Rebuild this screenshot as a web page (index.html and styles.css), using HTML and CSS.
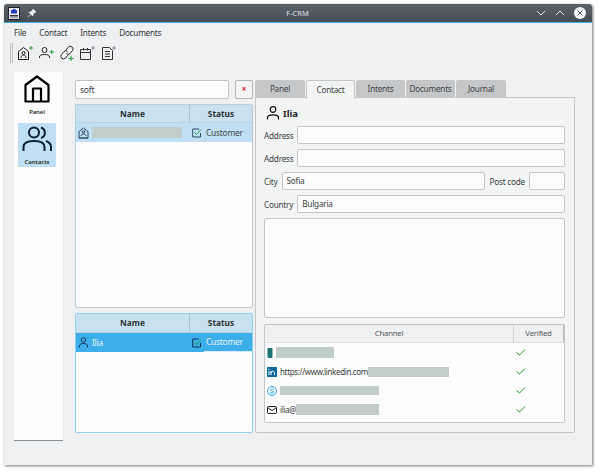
FILE: index.html
```html
<!DOCTYPE html>
<html>
<head>
<meta charset="utf-8">
<title>F-CRM</title>
<link rel="stylesheet" href="styles.css">
</head>
<body>
<div class="window">
  <header class="titlebar">
    <div class="tb-left">
      <svg class="app-icon" width="12" height="13" viewBox="0 0 12 13"><rect x=".5" y=".5" width="11" height="12" fill="#e8e8ee" stroke="#223"/><path d="M3 6.500V3.500L6 1.800 9 3.500V6.500Z" fill="#2a3fc0"/><rect x="2" y="8" width="8" height="1.500" fill="#334"/><rect x="2" y="10.300" width="8" height="1" fill="#889"/></svg>
      <svg class="pin" width="10" height="10" viewBox="0 0 10 10"><path d="M6 1l3 3-1.500.6L6 6.500 5.600 8 2 4.400 3.500 4 5.400 2.500ZM3.500 6.500L1 9" fill="#eef0f1" stroke="#eef0f1" stroke-width=".7"/></svg>
    </div>
    <div class="tb-title">F-CRM</div>
    <div class="tb-right">
      <svg width="10" height="6" viewBox="0 0 10 6"><path d="M1 1l4 4 4-4" fill="none" stroke="#e4e7e9"/></svg>
      <svg width="10" height="6" viewBox="0 0 10 6"><path d="M1 5l4-4 4 4" fill="none" stroke="#e4e7e9"/></svg>
      <svg width="12" height="12" viewBox="0 0 12 12"><circle cx="6" cy="6" r="6" fill="#f4f5f5"/><path d="M3.500 3.500l5 5M8.500 3.500l-5 5" stroke="#4d5660" stroke-width="1"/></svg>
    </div>
  </header>
  <nav class="menubar"><span>File</span><span>Contact</span><span>Intents</span><span>Documents</span></nav>
  <div class="toolbar">
    <div class="grip"></div>
    <svg width="16" height="16" viewBox="0 0 16 16" fill="none" stroke="#222"><path d="M1.500 14.500V6.500L6.500 2.500 11.500 6.500V14.500Z"/><circle cx="6.500" cy="8" r="1.500"/><path d="M4 13c0-4 5-4 5 0M1.500 14.500H11.500"/><path d="M12 3h4M14 1v4" stroke="#2c9a3c"/></svg>
    <svg width="15" height="16" viewBox="0 0 15 16" fill="none" stroke="#222"><circle cx="5.500" cy="5" r="2.500"/><path d="M.5 13v-1c0-1.500 1.500-2.500 5-2.500s5 1 5 2.500v1"/><path d="M10.500 7h4.500M12.750 5v4" stroke="#2c9a3c"/></svg>
    <svg width="14" height="16" viewBox="0 0 14 16" fill="none" stroke="#222"><path d="M6 5l2-2.500a2.400 2.400 0 0 1 4.500 3L10 8.500a2.500 2.500 0 0 1-3.500 0M8 10l-2.500 3a2.400 2.400 0 0 1-4-3.500L4 6.500a2.500 2.500 0 0 1 3.500 0"/><path d="M8.500 13.500h5M11 11v5" stroke="#2c9a3c"/></svg>
    <svg width="15" height="16" viewBox="0 0 15 16" fill="none" stroke="#333"><path d="M.5 4.500H10.500V14.500H.5ZM.5 7.500H10.500M3.500 3V5.500M7.500 3V5.500"/><path d="M11 3h4M13 1v4" stroke="#889"/></svg>
    <svg width="15" height="16" viewBox="0 0 15 16" fill="none" stroke="#333"><path d="M1.500 2.500H8.500L11.500 5.500V14.500H1.500ZM4 6.500H9M4 9H9M4 11.500H9"/><path d="M11 3h4M13 1v4" stroke="#889"/></svg>
  </div>
  <main class="content">
    <aside class="sidebar">
      <div class="side-item first">
        <svg width="26" height="28" viewBox="0 0 26 28" fill="none" stroke="#000" stroke-width="2.200" stroke-linejoin="round"><path d="M1.500 26.500V10L13 1.500 24.500 10V26.500Z"/><path d="M9 26.500V13.500H17V26.500"/></svg>
        <span>Panel</span>
      </div>
      <div class="side-item active">
        <svg width="30" height="28" viewBox="0 0 30 28" fill="none" stroke="#0c1f33" stroke-width="2"><circle cx="12" cy="6.500" r="5"/><path d="M1.500 25v-4c0-4 4-6 10.500-6s10.500 2 10.500 6v4"/><path d="M19 1.500a5.500 5.500 0 0 1 0 10.500M24 15c3 1 5 3 5 6v4"/></svg>
        <span>Contacts</span>
      </div>
    </aside>
    <section class="lists">
      <div class="search">
        <div class="search-input">soft</div>
        <div class="clear">×</div>
      </div>
      <div class="list list-top">
        <div class="list-head"><div>Name</div><div>Status</div></div>
        <div class="list-row">
          <div class="cell-name">
            <svg width="11" height="12" viewBox="0 0 11 12" fill="none" stroke="#2c4a63"><path d="M1 11V4.500L5.500 1 10 4.500V11Z"/><circle cx="5.500" cy="5" r="1.300"/><path d="M3 9c0-2.500 5-2.500 5 0M1 11H10"/></svg>
            <i class="redact r-name"></i>
          </div>
          <div class="cell-status">
            <svg width="10" height="10" viewBox="0 0 10 10" fill="none"><path d="M8.500 5v4H.700V1H7" stroke="#2c4a63"/><path d="M2.500 4.500L4.500 6.500 9 1.500" stroke="#2c9a4c"/></svg>
            <span>Customer</span>
          </div>
        </div>
      </div>
      <div class="list list-bottom">
        <div class="list-head"><div>Name</div><div>Status</div></div>
        <div class="list-row selected">
          <div class="cell-name">
            <svg width="11" height="11" viewBox="0 0 11 11" fill="none" stroke="#12375a"><circle cx="5.500" cy="3" r="2.200"/><path d="M1.500 10.500V9c0-1.500 1.500-2.500 4-2.500s4 1 4 2.500v1.500"/></svg>
            <span>Ilia</span>
          </div>
          <div class="cell-status">
            <svg width="10" height="10" viewBox="0 0 10 10" fill="none"><path d="M8.500 5v4H.700V1H7" stroke="#12375a"/><path d="M2.500 4.500L4.500 6.500 9 1.500" stroke="#2c9a4c"/></svg>
            <span>Customer</span>
          </div>
        </div>
      </div>
    </section>
    <section class="detail">
      <div class="tabs">
        <div class="tab">Panel</div>
        <div class="tab current">Contact</div>
        <div class="tab">Intents</div>
        <div class="tab">Documents</div>
        <div class="tab">Journal</div>
      </div>
      <div class="pane">
        <div class="person">
          <svg width="14" height="14" viewBox="0 0 14 14" fill="none" stroke="#111" stroke-width="1.200"><circle cx="7" cy="3.500" r="2.800"/><path d="M1.500 13.500V11.500c0-1.500 2-2.700 5.500-2.700s5.500 1.200 5.500 2.700v2"/></svg>
          <span>Ilia</span>
        </div>
        <div class="field"><label>Address</label><div class="input"></div></div>
        <div class="field"><label>Address</label><div class="input"></div></div>
        <div class="field"><label>City</label><div class="input">Sofia</div><label class="post">Post code</label><div class="input zip"></div></div>
        <div class="field"><label>Country</label><div class="input">Bulgaria</div></div>
        <div class="notes"></div>
        <div class="channels">
          <div class="ch-head"><div>Channel</div><div>Verified</div></div>
          <div class="ch-row">
            <div class="ch-main">
              <svg width="6" height="10" viewBox="0 0 6 10"><rect x=".5" y="0" width="5" height="10" rx="1" fill="#1a7470"/></svg>
              <i class="redact r1"></i>
            </div>
            <svg class="tick" width="10" height="7" viewBox="0 0 10 7" fill="none"><path d="M.500 3.500L3.500 6 9 .500" stroke="#1d9a24"/></svg>
          </div>
          <div class="ch-row">
            <div class="ch-main">
              <svg width="10" height="10" viewBox="0 0 10 10"><rect width="10" height="10" rx="1" fill="#0e6a9e"/><path d="M2 4v4M2 2v1M4 8V4M4 6c0-2 3.500-2.500 3.500 0V8" stroke="#fff" fill="none"/></svg>
              <span class="ch-text">https://www.linkedin.com<i class="redact r2"></i></span>
            </div>
            <svg class="tick" width="10" height="7" viewBox="0 0 10 7" fill="none"><path d="M.500 3.500L3.500 6 9 .500" stroke="#1d9a24"/></svg>
          </div>
          <div class="ch-row">
            <div class="ch-main">
              <svg width="10" height="10" viewBox="0 0 10 10" fill="none" stroke="#29a9e0"><circle cx="5" cy="5" r="4.500"/><path d="M7 3.500C6 2.500 3.200 2.800 3.500 4.200 3.800 5.500 6.800 4.800 6.800 6.300 6.800 7.500 4 7.500 3 6.500"/></svg>
              <i class="redact r3"></i>
            </div>
            <svg class="tick" width="10" height="7" viewBox="0 0 10 7" fill="none"><path d="M.500 3.500L3.500 6 9 .500" stroke="#1d9a24"/></svg>
          </div>
          <div class="ch-row">
            <div class="ch-main">
              <svg width="10" height="8" viewBox="0 0 10 8" fill="none" stroke="#222"><rect x=".5" y=".5" width="9" height="7" rx="1"/><path d="M.5 1.500L5 4.500 9.500 1.500"/></svg>
              <span class="ch-text">ilia@<i class="redact r4"></i></span>
            </div>
            <svg class="tick" width="10" height="7" viewBox="0 0 10 7" fill="none"><path d="M.500 3.500L3.500 6 9 .500" stroke="#1d9a24"/></svg>
          </div>
        </div>
      </div>
    </section>
  </main>
</div>
</body>
</html>
```

FILE: styles.css
```css
* { box-sizing: border-box; }
html, body { margin: 0; padding: 0; }
body { width: 600px; height: 473px; background: #fff; font-family: "Noto Sans", sans-serif; font-size: 8.2px; letter-spacing: -.22px; color: #3a3e42; overflow: hidden; }
.window { margin: 4px 0 0 4px; width: 588px; height: 461px; background: #eff0f1; border-radius: 3px 3px 0 0; box-shadow: 1px 1px 3px rgba(0,0,0,.55); display: flex; flex-direction: column; overflow: hidden; }
.titlebar { height: 19px; flex: none; display: flex; align-items: center; justify-content: space-between; padding: 0 6px 0 4px; background: linear-gradient(#5a626a, #454c54); border-bottom: 1px solid #3daee9; }
.tb-left { display: flex; align-items: center; gap: 7px; }
.tb-title { color: #dfe2e4; font-size: 7.5px; letter-spacing: 0; flex: 1; text-align: center; padding-left: 22px; }
.tb-right { display: flex; align-items: center; gap: 9px; }
.menubar { height: 18px; flex: none; display: flex; align-items: center; gap: 13px; padding: 1px 0 0 10px; color: #33373b; }
.toolbar { height: 25px; flex: none; display: flex; align-items: center; gap: 6px; padding: 0 0 1px 6px; }
.grip { width: 3px; height: 20px; border-left: 1px solid #bbbdbf; border-right: 1px solid #bbbdbf; margin-right: -2px; }
.content { flex: 1; display: flex; padding: 6px 17px 26px 10px; min-height: 0; }
.sidebar { width: 49px; flex: none; height: 369px; background: #fcfcfc; border-bottom: 1px solid #8e9194; display: flex; flex-direction: column; align-items: center; padding: 3px 3px 0 0; }
.side-item { width: 38px; display: flex; flex-direction: column; align-items: center; font-size: 5.8px; letter-spacing: 0; font-weight: 600; color: #1c1f22; }
.side-item span { line-height: 8px; }
.side-item.first { height: 48px; gap: 5px; }
.side-item.active { background: #bedff4; height: 44px; padding-top: 3px; gap: 4px; }
.lists { width: 178px; flex: none; margin-left: 12px; display: flex; flex-direction: column; }
.search { display: flex; height: 19px; margin: 8px 0 5px; gap: 6px; }
.search-input { width: 154px; background: #fcfcfc; border: 1px solid #c4c6c8; border-radius: 2px; padding: 0 4px; line-height: 17px; font-size: 8.5px; }
.clear { width: 18px; background: #f2f3f4; border: 1px solid #b4b6b8; border-radius: 2px; color: #d8131a; font-weight: 700; font-size: 8px; line-height: 16px; text-align: center; }
.list { background: #fcfcfc; border: 1px solid #c4c6c8; border-radius: 2px; }
.list-top { height: 204px; border-top-color: #b8cfdc; border-left-color: #b8cfdc; }
.list-top .list-head { height: 18px; }
.list-bottom { height: 120px; margin-top: 5px; border-color: #93cfee; }
.list-head { display: flex; height: 19px; background: #c9e1ef; border-bottom: 1px solid #bcd2df; font-weight: 700; font-size: 8.3px; letter-spacing: 0; color: #2f3336; line-height: 17px; text-align: center; }
.list-head div:first-child { width: 114px; border-right: 1px solid #aec4d1; }
.list-head div:last-child { flex: 1; }
.list-row { display: flex; height: 19px; background: #bedff4; align-items: center; }
.cell-name { width: 114px; display: flex; align-items: center; gap: 3px; padding-left: 2px; }
.cell-status { flex: 1; align-self: stretch; display: flex; align-items: center; gap: 4px; padding-left: 2px; font-size: 8.4px; color: #45494d; }
.list-row.selected { background: #3daee9; color: #e6f5fd; }
.list-row.selected .cell-name span { font-size: 8.4px; }
.list-row.selected .cell-status { color: #e6f5fd; }
.list-row.selected .cell-status span { flex: 1; align-self: stretch; line-height: 18px; border-bottom: 1px solid #d6eefa; margin-left: -2px; padding-left: 2px; }
.redact { display: block; background: #c1cdc9; }
.r-name { width: 90px; height: 11px; }
.detail { flex: 1; margin-left: 2px; display: flex; flex-direction: column; min-width: 0; }
.tabs { display: flex; height: 18px; gap: 1px; margin-top: 8px; flex: none; }
.tab { width: 49px; background: #c4c6c8; text-align: center; line-height: 18px; border-radius: 2px 2px 0 0; color: #3f4347; }
.tab:first-child { width: 50px; }
.tab:last-child { width: 50px; }
.tab.current { background: #f3f5f4; border: 1px solid #c4c6c8; border-bottom: 0; line-height: 17px; position: relative; z-index: 1; height: 19px; }
.pane { width: 320px; height: 336px; background: #f3f5f4; border: 1px solid #c4c6c8; border-radius: 0 0 2px 2px; margin-top: -1px; padding: 7px 9px 9px 8px; display: flex; flex-direction: column; }
.person { display: flex; align-items: center; gap: 3px; height: 16px; font-weight: 700; font-size: 9.5px; letter-spacing: 0; color: #232629; margin-bottom: 5px; padding-left: 2px; }
.field { display: flex; align-items: center; gap: 4px; height: 18px; margin-bottom: 5px; }
.input { flex: 1; height: 18px; background: #fcfcfc; border: 1px solid #c4c6c8; border-radius: 2px; line-height: 16px; padding: 0 4px; color: #3a3e42; }
.input.zip { flex: none; width: 36px; }
label { flex: none; }
.post { margin-left: 1px; }
.notes { height: 100px; flex: none; background: #fcfcfc; border: 1px solid #c4c6c8; border-radius: 2px; }
.channels { margin-top: 6px; height: 99px; background: #fcfcfc; border: 1px solid #c4c6c8; border-radius: 2px; }
.ch-head { display: flex; height: 18px; background: #eff0f1; border-bottom: 1px solid #dcdedf; line-height: 17px; text-align: center; color: #55595d; font-size: 7.8px; }
.ch-head div:first-child { width: 249px; border-right: 1px solid #d0d2d4; }
.ch-head div:last-child { flex: 1; border-right: 1px solid #b8babc; }
.ch-row { display: flex; height: 19px; align-items: center; justify-content: space-between; padding: 0 38px 0 2px; }
.ch-main { display: flex; align-items: center; gap: 3px; }
.ch-text { display: flex; align-items: center; font-size: 8px; letter-spacing: -.35px; }
.tick { flex: none; }
.r1 { width: 58px; height: 11px; }
.r2 { width: 81px; height: 10px; }
.r3 { width: 99px; height: 9px; }
.r4 { width: 83px; height: 11px; }
```
